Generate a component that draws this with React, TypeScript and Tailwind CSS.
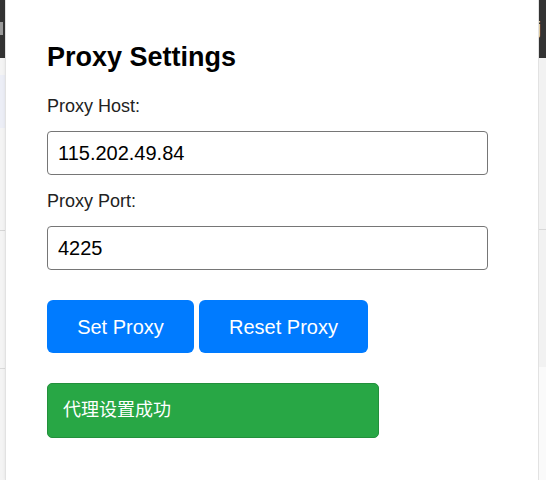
import React from 'react';

const font = { fontFamily: '"Liberation Sans", Arial, "Noto Sans CJK SC", sans-serif' };

export default function App() {
  return (
    <div className="flex w-[546px] h-[480px] overflow-hidden bg-white" style={font}>
      {/* page behind the popup, left edge */}
      <div className="w-[5px] shrink-0 flex flex-col bg-[#f4f4f4]">
        <div className="h-[58px] bg-[#333333] flex flex-col">
          <div className="mt-[22px] h-[13px] w-[3px] bg-[#9a9a9a]" />
        </div>
        <div className="h-[17px]" />
        <div className="h-[53px] bg-[#eceef6]" />
        <div className="h-[102px]" />
        <div className="h-px bg-[#d6d6d6]" />
        <div className="h-[137px]" />
        <div className="h-px bg-[#dadada]" />
      </div>

      {/* popup */}
      <div className="flex-1 border-l border-r border-[#e2e2e2] bg-white pl-[41px] pr-[50px] shadow-[0_0_3px_rgba(0,0,0,0.08)]">
        <h1 className="mt-[42px] text-[27px] leading-[30px] font-bold text-black">Proxy Settings</h1>

        <label className="block mt-[24px] text-[18px] leading-[20px] text-[#222]">Proxy Host:</label>
        <input
          readOnly
          value="115.202.49.84"
          className="mt-[15px] block w-full h-[44px] rounded-[4px] border border-[#767676] px-[10px] text-[20px] text-black outline-none"
          style={font}
        />

        <label className="block mt-[16px] text-[18px] leading-[20px] text-[#222]">Proxy Port:</label>
        <input
          readOnly
          value="4225"
          className="mt-[15px] block w-full h-[44px] rounded-[4px] border border-[#767676] px-[10px] text-[20px] text-black outline-none"
          style={font}
        />

        <div className="mt-[30px] flex gap-[5px]">
          <button className="w-[147px] h-[53px] rounded-[6px] bg-[#007bff] text-white text-[20px]" style={font}>
            Set Proxy
          </button>
          <button className="w-[169px] h-[53px] rounded-[6px] bg-[#007bff] text-white text-[20px]" style={font}>
            Reset Proxy
          </button>
        </div>

        <div className="mt-[30px] w-[332px] h-[55px] flex items-center rounded-[5px] border border-[#23903c] bg-[#28a745] pl-[15px] text-[18px] text-white">
          代理设置成功
        </div>
      </div>

      {/* page behind the popup, right edge */}
      <div className="w-[7px] shrink-0 flex flex-col bg-[#f2f2f2]">
        <div className="h-[58px] bg-[#333333] overflow-hidden">
          <div className="mt-[18px] -ml-[2px] text-[18px] leading-[20px] text-[#dfe8f5] whitespace-nowrap">j</div>
        </div>
        <div className="h-[171px]" />
        <div className="h-px bg-[#d8d8d8]" />
        <div className="h-[137px]" />
        <div className="flex-1 bg-[#fafafa]" />
      </div>
    </div>
  );
}
